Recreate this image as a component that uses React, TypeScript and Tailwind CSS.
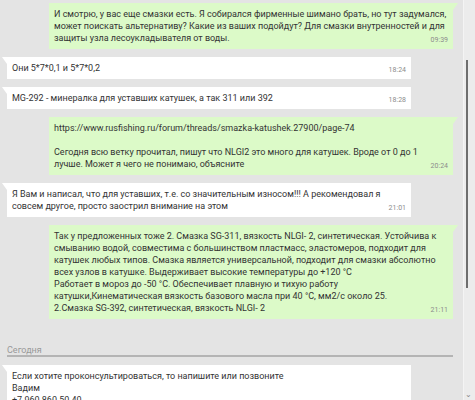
import React from "react";

type Msg = { out: boolean; lines: string[]; time: string };

const msgs: Msg[] = [
  {
    out: true,
    lines: [
      "И смотрю, у вас еще смазки есть. Я собирался фирменные шимано брать, но тут задумался,",
      "может поискать альтернативу? Какие из ваших подойдут? Для смазки внутренностей и для",
      "защиты узла лесоукладывателя от воды.",
    ],
    time: "09:39",
  },
  { out: false, lines: ["Они 5*7*0,1 и 5*7*0,2"], time: "18:24" },
  { out: false, lines: ["MG-292 - минералка для уставших катушек, а так 311 или 392"], time: "18:28" },
  {
    out: true,
    lines: [
      "https://www.rusfishing.ru/forum/threads/smazka-katushek.27900/page-74",
      "",
      "Сегодня всю ветку прочитал, пишут что NLGI2 это много для катушек. Вроде от 0 до 1",
      "лучше. Может я чего не понимаю, объясните",
    ],
    time: "20:24",
  },
  {
    out: false,
    lines: [
      "Я Вам и написал, что для уставших, т.е. со значительным износом!!! А рекомендовал я",
      "совсем другое, просто заострил внимание на этом",
    ],
    time: "21:01",
  },
  {
    out: true,
    lines: [
      "Так у предложенных тоже 2. Смазка SG-311, вязкость NLGI- 2, синтетическая. Устойчива к",
      "смыванию водой, совместима с большинством пластмасс, эластомеров, подходит для",
      "катушек любых типов. Смазка является универсальной, подходит для смазки абсолютно",
      "всех узлов в катушке. Выдерживает высокие температуры до +120 °С",
      "Работает в мороз до -50 °С. Обеспечивает плавную и тихую работу",
      "катушки,Кинематическая вязкость базового масла при 40 °С, мм2/с около 25.",
      "2.Смазка SG-392, синтетическая, вязкость NLGI- 2",
    ],
    time: "21:11",
  },
];

function Bubble({ m }: { m: Msg }) {
  return (
    <div
      className={
        m.out
          ? "relative ml-[49px] w-[404px] shrink-0 bg-[#dcfac8] p-[5px] flex items-end"
          : "relative ml-[7px] w-[404px] shrink-0 bg-white p-[5px] flex items-end"
      }
    >
      {m.out ? (
        <div className="absolute top-0 -right-[5px] w-0 h-0 border-t-[7px] border-t-[#dcfac8] border-r-[5px] border-r-transparent" />
      ) : (
        <div className="absolute top-0 -left-[5px] w-0 h-0 border-t-[7px] border-t-white border-l-[5px] border-l-transparent" />
      )}
      <div className="flex-1 min-w-0 text-[9px] leading-[12px] text-[#333]">
        {m.lines.map((l, i) =>
          l === "" ? (
            <div key={i} className="h-[12px]" />
          ) : (
            <div key={i} className="whitespace-nowrap">
              {l}
            </div>
          )
        )}
      </div>
      {m.time && (
        <div className="shrink-0 mb-[-1px] text-[7px] leading-[9px] text-[#8c8c8c]">{m.time}</div>
      )}
    </div>
  );
}

export default function App() {
  return (
    <div className="w-[475px] h-[400px] overflow-hidden bg-[#e4e4e4] flex font-['Roboto',sans-serif]">
      <div className="flex-1 flex flex-col gap-2 pt-[3px]">
        {msgs.map((m, i) => (
          <Bubble key={i} m={m} />
        ))}
        <div className="mt-[18px] ml-[7px] w-[446px] border-b-2 border-[#b4b4b4]">
          <div className="text-[9px] leading-[10px] text-[#999]">Сегодня</div>
        </div>
        <Bubble
          m={{
            out: false,
            lines: [
              "Если хотите проконсультироваться, то напишите или позвоните",
              "Вадим",
              "+7 960 860 50 40",
            ],
            time: "",
          }}
        />
      </div>
      <div className="w-[12px] h-full flex flex-col bg-[#ececec] border-l border-[#f4f4f4] pt-[60px] pb-[1px]">
        <div className="ml-[2px] w-[2px] h-[228px] bg-[#6e6e6e]" />
        <div className="flex-1" />
        <div className="ml-[1px] text-[8px] leading-[8px] text-[#888]">⌄</div>
      </div>
    </div>
  );
}
